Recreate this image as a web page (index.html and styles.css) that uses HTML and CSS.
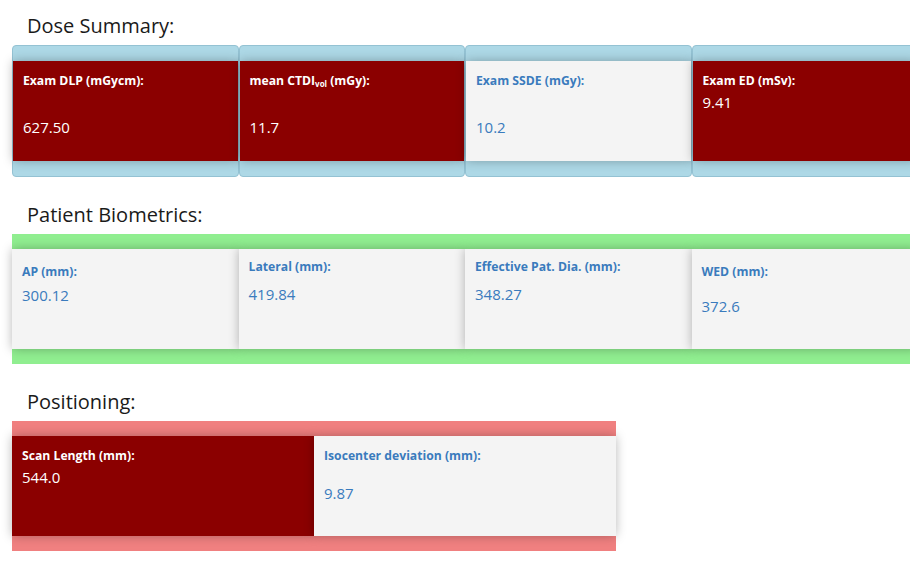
FILE: index.html
```html
<!DOCTYPE html>
<html>
<head>
<meta charset="utf-8">
<link rel="stylesheet" href="styles.css">
</head>
<body>
<div class="page">
  <section class="section">
    <h2 class="heading">Dose Summary:</h2>
    <div class="row row-dose">
      <div class="cell bordered">
        <div class="box dark">
          <div class="label">Exam DLP (mGycm):</div>
          <div class="value gap-lg">627.50</div>
        </div>
      </div>
      <div class="cell bordered">
        <div class="box dark">
          <div class="label">mean CTDI<sub>vol</sub> (mGy):</div>
          <div class="value gap-lg">11.7</div>
        </div>
      </div>
      <div class="cell bordered">
        <div class="box light">
          <div class="label">Exam SSDE (mGy):</div>
          <div class="value gap-lg">10.2</div>
        </div>
      </div>
      <div class="cell bordered">
        <div class="box dark">
          <div class="label">Exam ED (mSv):</div>
          <div class="value">9.41</div>
        </div>
      </div>
    </div>
  </section>

  <section class="section">
    <h2 class="heading">Patient Biometrics:</h2>
    <div class="row row-bio">
      <div class="cell">
        <div class="box light">
          <div class="label lower">AP (mm):</div>
          <div class="value gap-xs">300.12</div>
        </div>
      </div>
      <div class="cell">
        <div class="box light">
          <div class="label upper">Lateral (mm):</div>
          <div class="value gap-sm">419.84</div>
        </div>
      </div>
      <div class="cell">
        <div class="box light">
          <div class="label upper">Effective Pat. Dia. (mm):</div>
          <div class="value gap-sm">348.27</div>
        </div>
      </div>
      <div class="cell">
        <div class="box light">
          <div class="label lower">WED (mm):</div>
          <div class="value gap-mdl">372.6</div>
        </div>
      </div>
    </div>
  </section>

  <section class="section">
    <h2 class="heading">Positioning:</h2>
    <div class="row row-pos">
      <div class="cell wide">
        <div class="box dark">
          <div class="label">Scan Length (mm):</div>
          <div class="value">544.0</div>
        </div>
      </div>
      <div class="cell wide">
        <div class="box light">
          <div class="label">Isocenter deviation (mm):</div>
          <div class="value gap-md">9.87</div>
        </div>
      </div>
    </div>
  </section>
</div>
</body>
</html>
```

FILE: styles.css
```css
html, body {
  margin: 0;
  padding: 0;
  background: #ffffff;
  overflow: hidden;
}

body {
  font-family: "Open Sans", "Noto Sans", sans-serif;
  color: #222;
}

.page {
  width: 920px;
  padding: 14px 0 0 12px;
}

.section {
  margin-bottom: 26px;
}

.heading {
  margin: 0 0 7px 15px;
  font-size: 20px;
  line-height: 24px;
  font-weight: 500;
  color: #1a1a1a;
}

.row {
  display: flex;
}

.row-dose .cell {
  width: 226.5px;
  box-sizing: border-box;
  background: #add8e6;
  border: 1px solid #94c2d3;
  border-radius: 4px;
  padding: 15px 0;
}

.row-bio {
  background: #90ee90;
  padding: 15px 0;
  width: 906px;
}

.row-bio .cell {
  width: 226.5px;
}

.row-pos {
  background: #f08080;
  padding: 15px 0;
  width: 604px;
}

.row-pos .cell {
  width: 302px;
}

.cell {
  position: relative;
}

.box {
  height: 100px;
  box-sizing: border-box;
  padding: 10px 10px;
  box-shadow: 0 0 10px rgba(0, 0, 0, 0.28);
  position: relative;
}

.dark {
  background: #8b0000;
  color: #ffffff;
}

.light {
  background: #f4f4f4;
  color: #3a7bbd;
}

.label {
  font-size: 12.2px;
  line-height: 20px;
  font-weight: 700;
  white-space: nowrap;
}

.label sub {
  font-size: 8px;
  vertical-align: -2px;
  line-height: 0;
}

.label.lower {
  margin-top: 3px;
}

.label.upper {
  margin-top: -2px;
}

.value {
  font-size: 15px;
  line-height: 22px;
  font-weight: 400;
}

.value.gap-lg {
  margin-top: 25px;
}

.value.gap-md {
  margin-top: 16px;
}

.value.gap-mdl {
  margin-top: 13px;
}

.value.gap-sm {
  margin-top: 6px;
}

.value.gap-xs {
  margin-top: 2px;
}
```
